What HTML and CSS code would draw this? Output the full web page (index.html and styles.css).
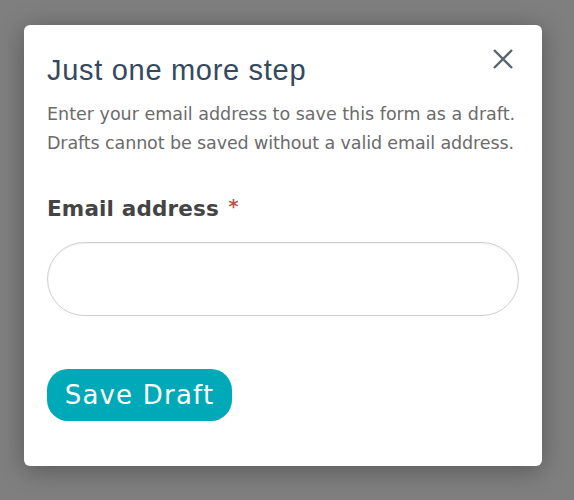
FILE: index.html
```html
<!DOCTYPE html>
<html lang="en">
<head>
<meta charset="utf-8">
<title>Save draft</title>
<link rel="stylesheet" href="styles.css">
</head>
<body>
<div class="overlay">
  <div class="modal">
    <button class="close" aria-label="Close">
      <svg width="22" height="22" viewBox="0 0 22 22"><path d="M2 2 L20 20 M20 2 L2 20" stroke="#5b6570" stroke-width="2.4" stroke-linecap="butt" fill="none"/></svg>
    </button>
    <h1 class="title">Just one more step</h1>
    <p class="desc"><span class="line">Enter your email address to save this form as a draft.</span><span class="line line-2">Drafts cannot be saved without a valid email address.</span></p>
    <label class="label" for="email">Email address <span class="req">*</span></label>
    <input class="input" id="email" type="email">
    <button class="save">Save Draft</button>
  </div>
</div>
</body>
</html>
```

FILE: styles.css
```css
html, body {
  margin: 0;
  padding: 0;
}
body {
  background: #7f7f7f;
  width: 574px;
  height: 500px;
  overflow: hidden;
}
.overlay {
  padding: 25px 0 0 24px;
}
.modal {
  position: relative;
  box-sizing: border-box;
  width: 518px;
  padding: 28px 23px 45px 23px;
  background: #fff;
  border-radius: 6px;
  box-shadow: 0 4px 26px rgba(0, 0, 0, 0.32);
  display: flex;
  flex-direction: column;
  align-items: flex-start;
}
.close {
  position: absolute;
  top: 23px;
  right: 28px;
  width: 22px;
  height: 22px;
  padding: 0;
  border: 0;
  background: none;
  display: block;
}
.close svg {
  display: block;
}
.title {
  margin: 0;
  font-family: "Liberation Sans", Arial, sans-serif;
  font-weight: normal;
  font-size: 29px;
  letter-spacing: 0.7px;
  line-height: 35px;
  color: #34495e;
}
.desc {
  margin: 12px 0 0 0;
  font-family: "DejaVu Sans", sans-serif;
  font-size: 17.5px;
  line-height: 29px;
  color: #6b6b6b;
  white-space: nowrap;
}
.line {
  display: block;
}
.line-2 {
  letter-spacing: -0.11px;
}
.label {
  margin-top: 38px;
  font-family: "DejaVu Sans", sans-serif;
  font-weight: bold;
  font-size: 21.5px;
  letter-spacing: 0.15px;
  line-height: 26px;
  color: #444;
}
.req {
  margin-left: 2px;
  color: #c0504d;
  font-size: 19px;
  line-height: 0;
  vertical-align: 3px;
}
.input {
  margin-top: 20px;
  box-sizing: border-box;
  width: 472px;
  height: 74px;
  border: 1.5px solid #cfcfcf;
  border-radius: 37px;
  background: #fff;
  box-shadow: inset 0 1px 2px rgba(0, 0, 0, 0.06);
  outline: none;
}
.save {
  margin-top: 53px;
  box-sizing: border-box;
  width: 185px;
  height: 52px;
  padding: 0;
  border: 0;
  border-radius: 21px;
  background: #00a9b7;
  color: #fff;
  font-family: "DejaVu Sans", sans-serif;
  font-size: 26px;
  letter-spacing: 1.2px;
  display: flex;
  align-items: center;
  justify-content: center;
}
```
